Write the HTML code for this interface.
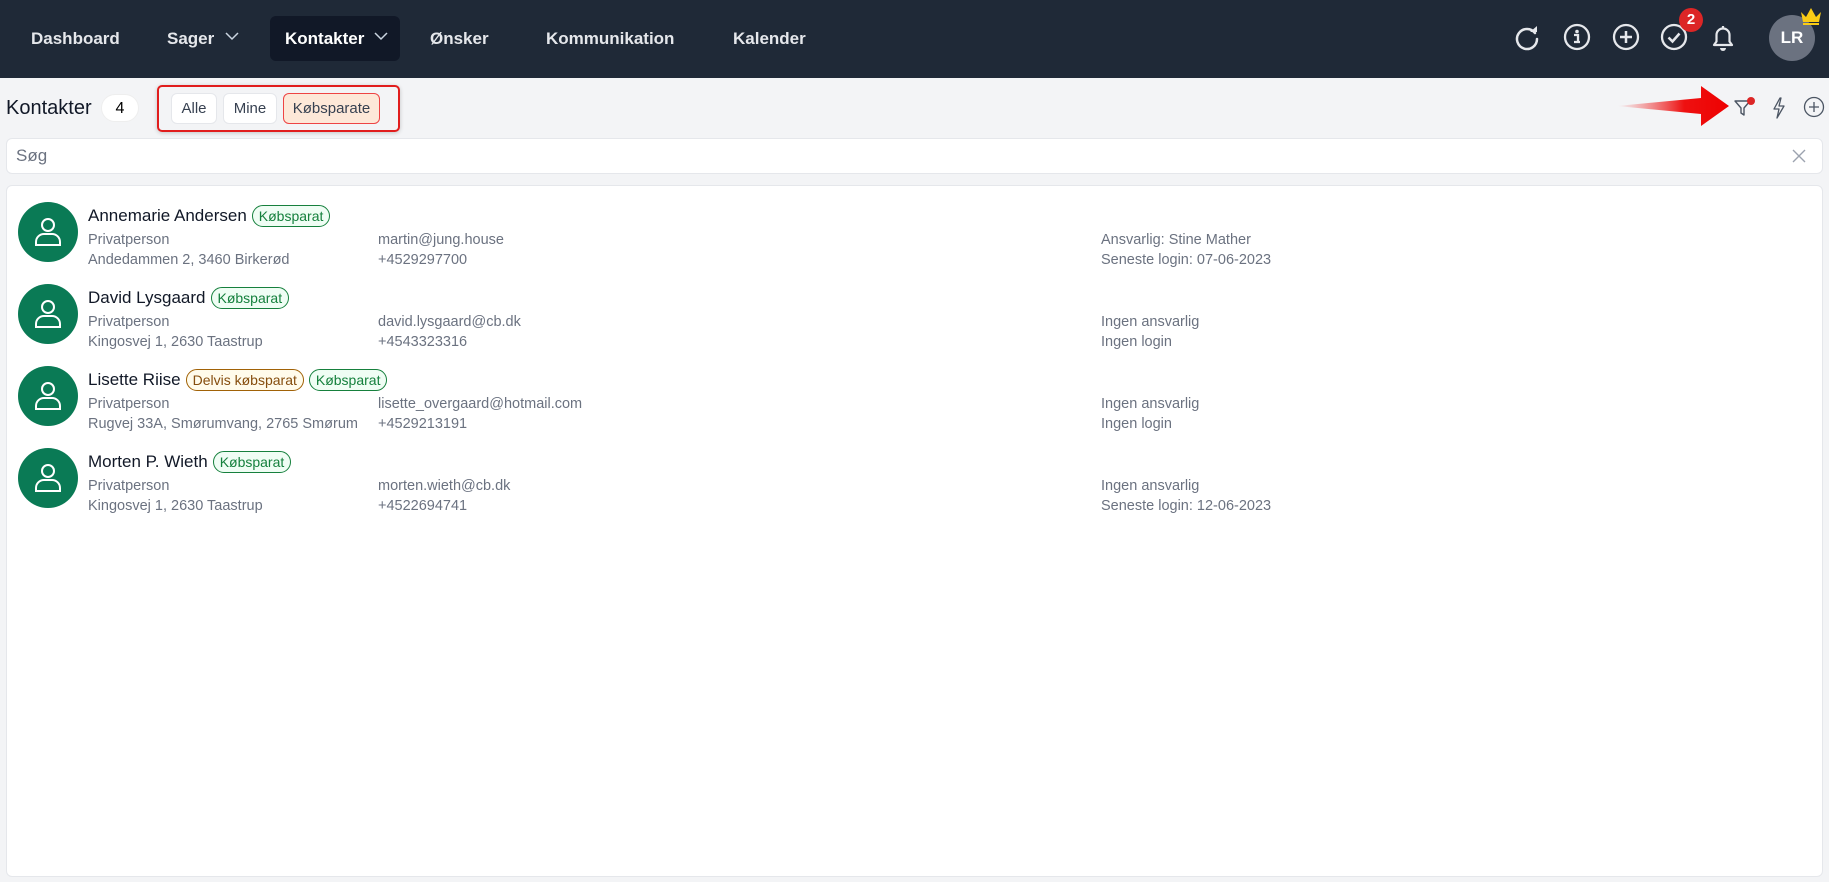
<!DOCTYPE html>
<html><head><meta charset="utf-8"><style>
*{box-sizing:border-box;margin:0;padding:0}
body{width:1829px;height:882px;overflow:hidden;background:#f3f4f6;font-family:"Liberation Sans",sans-serif;position:relative}
.nav{position:absolute;left:0;top:0;width:1829px;height:78px;background:#1f2937}
.ni{position:absolute;top:29px;color:#e5e7eb;font-size:17px;font-weight:bold}
.act{position:absolute;left:270px;top:16px;width:130px;height:45px;background:#111827;border-radius:6px}
.chev{position:absolute;top:31px}
.ic{position:absolute;top:23px}
.t{position:absolute}
.btn{position:absolute;top:93px;height:31px;background:#fff;border:1px solid #e5e7eb;border-radius:6px;font-size:15px;color:#374151;display:flex;align-items:center;justify-content:center}
.card{position:absolute;left:6px;top:185px;width:1817px;height:692px;background:#fff;border:1px solid #e5e7eb;border-radius:6px}
.row{position:absolute;left:0;width:1817px;height:82px}
.av{position:absolute;left:11px;top:0;width:60px;height:60px;border-radius:50%;background:#0a7a55}
.av svg{position:absolute;left:15px;top:14px}
.nm{position:absolute;left:81px;top:3px;font-size:17px;color:#111827;display:flex;align-items:center;gap:5px;white-space:nowrap}
.bg{font-size:14px;border:1.5px solid #16803d;background:#effdf4;color:#15803d;border-radius:11px;padding:2px 6px}
.bo{border-color:#a16207;background:#fffbeb;color:#854d0e}
.d{position:absolute;font-size:14.5px;color:#6b7280;white-space:nowrap}
</style></head><body>
<div class="nav">
<div class="act"></div>
<div class="ni" style="left:31px">Dashboard</div>
<div class="ni" style="left:167px">Sager</div>
<svg class="chev" style="left:225px" width="14" height="10"><path d="M1 2l6 6 6-6" stroke="#cbd5e1" fill="none" stroke-width="1.5"/></svg>
<div class="ni" style="left:285px;color:#fff">Kontakter</div>
<svg class="chev" style="left:374px" width="14" height="10"><path d="M1 2l6 6 6-6" stroke="#cbd5e1" fill="none" stroke-width="1.5"/></svg>
<div class="ni" style="left:430px">Ønsker</div>
<div class="ni" style="left:546px">Kommunikation</div>
<div class="ni" style="left:733px">Kalender</div>
<svg class="ic" style="left:1513px" width="28" height="28" viewBox="0 0 28 28"><path d="M22 10A10 10 0 1 0 24 16" stroke="#e5e7eb" stroke-width="2.5" fill="none" stroke-linecap="round"/><path d="M17 9h7V3z" fill="#e5e7eb"/></svg>
<svg class="ic" style="left:1563px" width="28" height="28" viewBox="0 0 28 28"><circle cx="14" cy="14" r="12" stroke="#e5e7eb" stroke-width="2.3" fill="none"/><circle cx="14" cy="8.5" r="1.8" fill="#e5e7eb"/><path d="M11 12h4v7h2M11 19h6" stroke="#e5e7eb" stroke-width="2.3" fill="none"/></svg>
<svg class="ic" style="left:1612px" width="28" height="28" viewBox="0 0 28 28"><circle cx="14" cy="14" r="12" stroke="#e5e7eb" stroke-width="2.3" fill="none"/><path d="M14 8v12M8 14h12" stroke="#e5e7eb" stroke-width="2.5"/></svg>
<svg class="ic" style="left:1660px" width="28" height="28" viewBox="0 0 28 28"><circle cx="14" cy="14" r="12" stroke="#e5e7eb" stroke-width="2.3" fill="none"/><path d="M8.5 14.5l4 4 7-8" stroke="#e5e7eb" stroke-width="2.5" fill="none"/></svg>
<div style="position:absolute;left:1679px;top:8px;width:24px;height:24px;border-radius:50%;background:#dc2626;color:#fff;font-weight:bold;font-size:15px;text-align:center;line-height:24px">2</div>
<svg class="ic" style="left:1709px" width="28" height="30" viewBox="0 0 28 30"><path d="M5 22h18l-2.5-3.5V12a6.5 6.5 0 0 0-13 0v6.5z" stroke="#e5e7eb" stroke-width="2.2" fill="none" stroke-linejoin="round"/><path d="M11 25a3 3 0 0 0 6 0" fill="#e5e7eb"/><path d="M14 3v2.5" stroke="#e5e7eb" stroke-width="2.2"/></svg>
<div style="position:absolute;left:1769px;top:15px;width:46px;height:46px;border-radius:50%;background:#6b7280;color:#fff;font-weight:bold;font-size:17px;text-align:center;line-height:46px">LR</div>
<svg style="position:absolute;left:1799px;top:6px" width="24" height="20" viewBox="0 0 24 20"><path d="M2 6l5 5 5-9 5 9 5-5-2 10H4z" fill="#facc15"/><rect x="4" y="17" width="16" height="2" fill="#facc15"/></svg>
</div>

<div class="t" style="left:6px;top:97px;font-size:20px;color:#111827">Kontakter</div>
<div style="position:absolute;left:101px;top:94px;width:38px;height:28px;border-radius:14px;background:#fff;border:1px solid #eee;text-align:center;line-height:27px;font-size:16px">4</div>
<div style="position:absolute;left:157px;top:85px;width:243px;height:47px;border:2px solid #e11d1d;border-radius:5px;box-shadow:0 1px 4px rgba(0,0,0,.2)"></div>
<div class="btn" style="left:171px;width:46px">Alle</div>
<div class="btn" style="left:223px;width:54px">Mine</div>
<div class="btn" style="left:283px;width:97px;background:#fde8d8;border-color:#e44">Købsparate</div>
<svg style="position:absolute;left:1615px;top:86px" width="116" height="40" viewBox="0 0 116 40"><defs><linearGradient id="g" x1="0" x2="1"><stop offset="0" stop-color="#ef4444" stop-opacity="0"/><stop offset=".6" stop-color="#ee1111"/><stop offset="1" stop-color="#ee0000"/></linearGradient></defs><path d="M2 20L86 12V0L114 20L86 40V28z" fill="url(#g)"/></svg>
<svg style="position:absolute;left:1733px;top:96px" width="24" height="22" viewBox="0 0 24 22"><path d="M2 5h15l-6 7v7l-3-2v-5z" stroke="#4b5563" stroke-width="1.4" fill="none" stroke-linejoin="round"/><circle cx="18" cy="5" r="4" fill="#dc2626"/></svg>
<svg style="position:absolute;left:1771px;top:96px" width="16" height="24" viewBox="0 0 16 24"><path d="M9 2L3 13h5l-2 9 7-12H8l2-8z" stroke="#4b5563" stroke-width="1.3" fill="none" stroke-linejoin="round"/></svg>
<svg style="position:absolute;left:1803px;top:96px" width="22" height="22" viewBox="0 0 22 22"><circle cx="11" cy="11" r="9.5" stroke="#4b5563" stroke-width="1.3" fill="none"/><path d="M11 6v10M6 11h10" stroke="#4b5563" stroke-width="1.3"/></svg>

<div style="position:absolute;left:6px;top:138px;width:1817px;height:36px;background:#fff;border:1px solid #e5e7eb;border-radius:6px"></div>
<div class="t" style="left:16px;top:146px;font-size:17px;color:#6b7280">Søg</div>
<svg style="position:absolute;left:1792px;top:149px" width="14" height="14"><path d="M1 1l12 12M13 1L1 13" stroke="#9ca3af" stroke-width="1.4"/></svg>

<div class="card">
<div class="row" style="top:16px">
<div class="av"><svg width="30" height="32" viewBox="0 0 30 32"><circle cx="15" cy="9" r="6" stroke="#fff" stroke-width="2" fill="none"/><path d="M3 29v-3a8 8 0 0 1 8-8h8a8 8 0 0 1 8 8v3z" stroke="#fff" stroke-width="2" fill="none"/></svg></div>
<div class="nm">Annemarie Andersen <span class="bg">Købsparat</span></div>
<div class="d" style="left:81px;top:30px">Privatperson</div><div class="d" style="left:81px;top:50px">Andedammen 2, 3460 Birkerød</div>
<div class="d" style="left:371px;top:30px">martin@jung.house</div><div class="d" style="left:371px;top:50px">+4529297700</div>
<div class="d" style="left:1094px;top:30px">Ansvarlig: Stine Mather</div><div class="d" style="left:1094px;top:50px">Seneste login: 07-06-2023</div>
</div>
<div class="row" style="top:98px">
<div class="av"><svg width="30" height="32" viewBox="0 0 30 32"><circle cx="15" cy="9" r="6" stroke="#fff" stroke-width="2" fill="none"/><path d="M3 29v-3a8 8 0 0 1 8-8h8a8 8 0 0 1 8 8v3z" stroke="#fff" stroke-width="2" fill="none"/></svg></div>
<div class="nm">David Lysgaard <span class="bg">Købsparat</span></div>
<div class="d" style="left:81px;top:30px">Privatperson</div><div class="d" style="left:81px;top:50px">Kingosvej 1, 2630 Taastrup</div>
<div class="d" style="left:371px;top:30px">david.lysgaard@cb.dk</div><div class="d" style="left:371px;top:50px">+4543323316</div>
<div class="d" style="left:1094px;top:30px">Ingen ansvarlig</div><div class="d" style="left:1094px;top:50px">Ingen login</div>
</div>
<div class="row" style="top:180px">
<div class="av"><svg width="30" height="32" viewBox="0 0 30 32"><circle cx="15" cy="9" r="6" stroke="#fff" stroke-width="2" fill="none"/><path d="M3 29v-3a8 8 0 0 1 8-8h8a8 8 0 0 1 8 8v3z" stroke="#fff" stroke-width="2" fill="none"/></svg></div>
<div class="nm">Lisette Riise <span class="bg bo">Delvis købsparat</span><span class="bg">Købsparat</span></div>
<div class="d" style="left:81px;top:30px">Privatperson</div><div class="d" style="left:81px;top:50px">Rugvej 33A, Smørumvang, 2765 Smørum</div>
<div class="d" style="left:371px;top:30px">lisette_overgaard@hotmail.com</div><div class="d" style="left:371px;top:50px">+4529213191</div>
<div class="d" style="left:1094px;top:30px">Ingen ansvarlig</div><div class="d" style="left:1094px;top:50px">Ingen login</div>
</div>
<div class="row" style="top:262px">
<div class="av"><svg width="30" height="32" viewBox="0 0 30 32"><circle cx="15" cy="9" r="6" stroke="#fff" stroke-width="2" fill="none"/><path d="M3 29v-3a8 8 0 0 1 8-8h8a8 8 0 0 1 8 8v3z" stroke="#fff" stroke-width="2" fill="none"/></svg></div>
<div class="nm">Morten P. Wieth <span class="bg">Købsparat</span></div>
<div class="d" style="left:81px;top:30px">Privatperson</div><div class="d" style="left:81px;top:50px">Kingosvej 1, 2630 Taastrup</div>
<div class="d" style="left:371px;top:30px">morten.wieth@cb.dk</div><div class="d" style="left:371px;top:50px">+4522694741</div>
<div class="d" style="left:1094px;top:30px">Ingen ansvarlig</div><div class="d" style="left:1094px;top:50px">Seneste login: 12-06-2023</div>
</div>
</div>
</body></html>
